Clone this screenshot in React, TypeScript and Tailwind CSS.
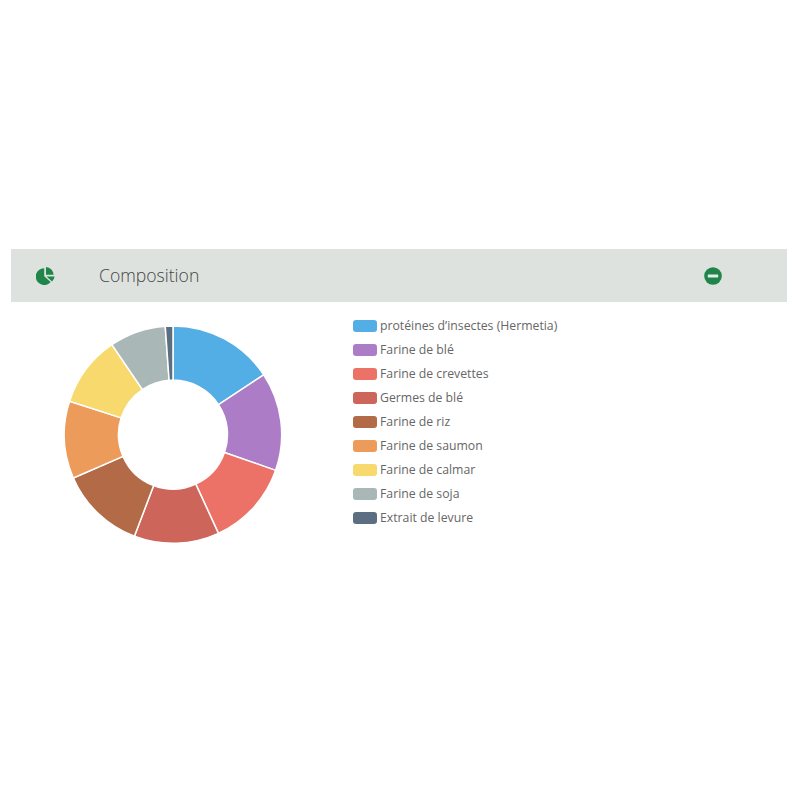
const ingredients = [
  { label: "protéines d’insectes (Hermetia)", color: "#53aee5", end: 56.6 },
  { label: "Farine de blé", color: "#ad7cc7", end: 109.2 },
  { label: "Farine de crevettes", color: "#ec7167", end: 155.3 },
  { label: "Germes de blé", color: "#cd655b", end: 200.8 },
  { label: "Farine de riz", color: "#b26b46", end: 246.5 },
  { label: "Farine de saumon", color: "#ec9b5b", end: 287.9 },
  { label: "Farine de calmar", color: "#f8d96e", end: 325.8 },
  { label: "Farine de soja", color: "#a9b7b7", end: 355.9 },
  { label: "Extrait de levure", color: "#5c6f82", end: 360 },
];

const OUTER = 108.7;
const INNER = 54.5;
const CENTER_X = 109;
const CENTER_Y = 109.6;

const point = (radius: number, deg: number) => {
  const rad = (deg * Math.PI) / 180;
  return `${CENTER_X + radius * Math.sin(rad)} ${CENTER_Y - radius * Math.cos(rad)}`;
};

const slicePath = (start: number, end: number) => {
  const large = end - start > 180 ? 1 : 0;
  return [
    `M${point(OUTER, start)}`,
    `A${OUTER} ${OUTER} 0 ${large} 1 ${point(OUTER, end)}`,
    `L${point(INNER, end)}`,
    `A${INNER} ${INNER} 0 ${large} 0 ${point(INNER, start)}`,
    "Z",
  ].join(" ");
};

const DonutChart = () => (
  <svg width="218" height="219" viewBox="0 0 218 219" className="shrink-0">
    {ingredients.map((item, i) => (
      <path
        key={item.label}
        d={slicePath(i === 0 ? 0 : ingredients[i - 1].end, item.end)}
        fill={item.color}
        stroke="#ffffff"
        strokeWidth="1.5"
      />
    ))}
  </svg>
);

const PieIcon = () => (
  <svg width="19" height="18" viewBox="0 0 19 18" className="shrink-0">
    <path d="M8.2 1.2 A8.4 8.4 0 1 0 14.6 15 L8.2 9.2 Z" fill="#1f8549" />
    <path d="M10 0 A8 8 0 0 1 17.6 7.8 L10 7.8 Z" fill="#1f8549" />
    <path d="M10.6 9.6 L18.6 9.6 A8.2 8.2 0 0 1 16 14.6 Z" fill="#1f8549" />
  </svg>
);

const MinusIcon = () => (
  <svg width="18" height="18" viewBox="0 0 18 18" className="shrink-0">
    <circle cx="9" cy="9" r="8.8" fill="#1f8549" />
    <rect x="3.8" y="7.4" width="10.4" height="3.2" rx="0.6" fill="#e8ece9" />
  </svg>
);

export default function App() {
  return (
    <div className="min-h-[800px] bg-white pt-[249px] px-[11px] font-['Open_Sans',sans-serif]">
      {/* Header */}
      <div className="flex h-[53px] w-[776px] items-center bg-[#dde2de]">
        <div className="ml-[25px] w-[63px]">
          <PieIcon />
        </div>
        <h2 className="w-[605px] text-[17.6px] font-light text-[#454545]">Composition</h2>
        <MinusIcon />
      </div>

      {/* Chart + legend */}
      <div className="flex items-start pl-[53px] pt-[23px]">
        <DonutChart />
        <ul className="ml-[71px] -mt-[11px] flex flex-col">
          {ingredients.map((item) => (
            <li key={item.label} className="flex h-[24px] items-center gap-[3px]">
              <span
                className="h-[12px] w-[24px] rounded-[3px]"
                style={{ backgroundColor: item.color }}
              />
              <span className="text-[12.25px] text-[#666666]">{item.label}</span>
            </li>
          ))}
        </ul>
      </div>
    </div>
  );
}
